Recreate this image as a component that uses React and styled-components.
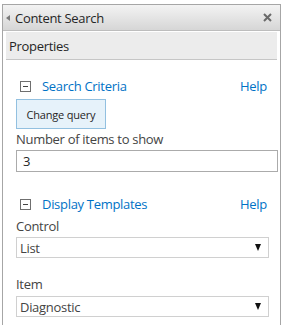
import React from "react";
import styled, { createGlobalStyle } from "styled-components";

const Global = createGlobalStyle`
  html, body { margin: 0; padding: 0; background: #fff; }
  body { font-family: "Open Sans", "Noto Sans", sans-serif; letter-spacing: -0.3px; }
`;

const Page = styled.div`
  padding: 4px 3px 0 2px;
  height: 325px;
  box-sizing: border-box;
  overflow: hidden;
`;

const Panel = styled.div`
  border: 1px solid #a6a6a6;
  border-bottom: none;
  height: 100%;
  box-sizing: border-box;
  display: flex;
  flex-direction: column;
`;

const TitleBar = styled.div`
  height: 25px;
  display: flex;
  align-items: center;
  padding: 0 8px 0 3px;
  background: linear-gradient(#f3f3f3, #d6d6d6);
  border-bottom: 1px solid #bdbdbd;
  font-size: 13px;
  color: #262626;
`;

const Title = styled.span`
  flex: 1;
  margin-left: 5px;
`;

const Body = styled.div`
  padding: 1px 3px 0 3px;
  display: flex;
  flex-direction: column;
`;

const PropsBar = styled.div`
  height: 27px;
  background: #ececec;
  border-bottom: 1px solid #c6c6c6;
  display: flex;
  align-items: center;
  padding-left: 3px;
  font-size: 13px;
  color: #262626;
`;

const Content = styled.div`
  padding: 0 0 0 10px;
  display: flex;
  flex-direction: column;
`;

const SectionHead = styled.div`
  display: flex;
  align-items: center;
  height: 20px;
  margin-top: ${(p) => p.$top}px;
  padding-left: 4px;
  padding-right: 10px;
`;

const Toggle = styled.span`
  width: 9px;
  height: 9px;
  border: 1px solid #6f6f6f;
  position: relative;
  flex: none;
  &::after {
    content: "";
    position: absolute;
    left: 2px;
    top: 4px;
    width: 5px;
    height: 1px;
    background: #444;
  }
`;

const SectionTitle = styled.span`
  flex: 1;
  margin-left: 11px;
  color: #0072c6;
  font-size: 13px;
`;

const HelpLink = styled.span`
  color: #0072c6;
  font-size: 13px;
`;

const Button = styled.div`
  margin-top: 3px;
  width: 88px;
  height: 28px;
  border: 1px solid #92c0e0;
  background: #e6f2fa;
  display: flex;
  align-items: center;
  justify-content: center;
  font-size: 11px;
  letter-spacing: -0.2px;
  color: #262626;
  box-sizing: content-box;
`;

const Label = styled.div`
  margin-top: ${(p) => p.$top}px;
  font-size: 13px;
  color: #444;
  height: 19px;
  line-height: 19px;
`;

const Input = styled.div`
  margin-top: 1px;
  height: 20px;
  border: 1px solid #ababab;
  display: flex;
  align-items: center;
  padding-left: 6px;
  font-size: 13px;
  color: #262626;
  margin-right: -1px;
`;

const Select = styled.div`
  margin-top: ${(p) => p.$top}px;
  height: 19px;
  width: 248px;
  border: 1px solid #d0d0d0;
  display: flex;
  align-items: center;
  padding-left: 3px;
  font-size: 13px;
  color: #444;
  justify-content: space-between;
`;

const Arrow = styled.span`
  width: 0;
  height: 0;
  border-left: 3.5px solid transparent;
  border-right: 3.5px solid transparent;
  border-top: 7px solid #111;
  margin-right: 7px;
`;

const LeftTri = styled.span`
  width: 0;
  height: 0;
  border-top: 3.5px solid transparent;
  border-bottom: 3.5px solid transparent;
  border-right: 4px solid #7a7a7a;
`;

const Close = () => (
  <svg width="9" height="9" viewBox="0 0 9 9">
    <path d="M1 1 L8 8 M8 1 L1 8" stroke="#6a6a6a" strokeWidth="2" />
  </svg>
);

export default function App() {
  return (
    <>
      <Global />
      <Page>
        <Panel>
          <TitleBar>
            <LeftTri />
            <Title>Content Search</Title>
            <Close />
          </TitleBar>
          <Body>
            <PropsBar>Properties</PropsBar>
            <Content>
              <SectionHead $top={16}>
                <Toggle />
                <SectionTitle>Search Criteria</SectionTitle>
                <HelpLink>Help</HelpLink>
              </SectionHead>
              <Button>Change query</Button>
              <Label $top={1}>Number of items to show</Label>
              <Input>3</Input>
              <SectionHead $top={22}>
                <Toggle />
                <SectionTitle>Display Templates</SectionTitle>
                <HelpLink>Help</HelpLink>
              </SectionHead>
              <Label $top={3}>Control</Label>
              <Select $top={1}>
                List
                <Arrow />
              </Select>
              <Label $top={17}>Item</Label>
              <Select $top={2}>
                Diagnostic
                <Arrow />
              </Select>
            </Content>
          </Body>
        </Panel>
      </Page>
    </>
  );
}
